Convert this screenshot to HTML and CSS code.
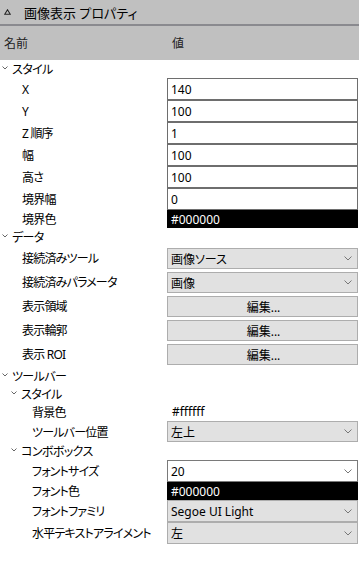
FILE: index.html
```html
<!DOCTYPE html>
<html lang="ja">

<head>
  <meta charset="UTF-8">
  <meta name="viewport" content="width=device-width, initial-scale=1.0">
  <title>画像表示 プロパティ</title>
  <link rel="stylesheet" href="styles.css">
</head>

<body>
  <div class="panel">
    <div class="titlebar">
      <svg class="collapse" width="7" height="6" viewBox="0 0 7 6"><polygon points="3.5,0.8 6.3,5.3 0.7,5.3" fill="none" stroke="#222" stroke-width="1.1"/></svg>
      <span>画像表示 プロパティ</span>
    </div>
    <div class="colhead">
      <span>名前</span>
      <span class="val-head">値</span>
    </div>

    <!-- スタイル -->
    <div class="row h18 section lv0"><svg class="chev" width="6" height="4" viewBox="0 0 6 4"><polyline points="0.5,0.5 3,3 5.5,0.5" fill="none" stroke="#666" stroke-width="1"/></svg>スタイル</div>
    <div class="row h22"><span class="label lv1">X</span><div class="text">140</div></div>
    <div class="row h22"><span class="label lv1">Y</span><div class="text">100</div></div>
    <div class="row h22"><span class="label lv1">Z 順序</span><div class="text">1</div></div>
    <div class="row h22"><span class="label lv1">幅</span><div class="text">100</div></div>
    <div class="row h22"><span class="label lv1">高さ</span><div class="text">100</div></div>
    <div class="row h22"><span class="label lv1">境界幅</span><div class="text">0</div></div>
    <div class="row h18"><span class="label lv1">境界色</span><div class="color">#000000</div></div>

    <!-- データ -->
    <div class="row h18 section lv0"><svg class="chev" width="6" height="4" viewBox="0 0 6 4"><polyline points="0.5,0.5 3,3 5.5,0.5" fill="none" stroke="#666" stroke-width="1"/></svg>データ</div>
    <div class="row h24 spaced"><span class="label lv1">接続済みツール</span><div class="combo"><span>画像ソース</span><svg class="drop" width="8" height="5" viewBox="0 0 8 5"><polyline points="0.5,0.5 4,4 7.5,0.5" fill="none" stroke="#777" stroke-width="1"/></svg></div></div>
    <div class="row h24 spaced"><span class="label lv1">接続済みパラメータ</span><div class="combo"><span>画像</span><svg class="drop" width="8" height="5" viewBox="0 0 8 5"><polyline points="0.5,0.5 4,4 7.5,0.5" fill="none" stroke="#777" stroke-width="1"/></svg></div></div>
    <div class="row h24 spaced"><span class="label lv1">表示領域</span><div class="button">編集...</div></div>
    <div class="row h24 spaced"><span class="label lv1">表示輪郭</span><div class="button">編集...</div></div>
    <div class="row h24 spaced"><span class="label lv1">表示 ROI</span><div class="button">編集...</div></div>

    <!-- ツールバー -->
    <div class="row h20 section lv0"><svg class="chev" width="6" height="4" viewBox="0 0 6 4"><polyline points="0.5,0.5 3,3 5.5,0.5" fill="none" stroke="#666" stroke-width="1"/></svg>ツールバー</div>
    <div class="row h16 section lv1"><svg class="chev" width="6" height="4" viewBox="0 0 6 4"><polyline points="0.5,0.5 3,3 5.5,0.5" fill="none" stroke="#666" stroke-width="1"/></svg>スタイル</div>
    <div class="row h19"><span class="label lv2">背景色</span><div class="plain">#ffffff</div></div>
    <div class="row h21"><span class="label lv2">ツールバー位置</span><div class="combo"><span>左上</span><svg class="drop" width="8" height="5" viewBox="0 0 8 5"><polyline points="0.5,0.5 4,4 7.5,0.5" fill="none" stroke="#777" stroke-width="1"/></svg></div></div>
    <div class="row h18 section lv1"><svg class="chev" width="6" height="4" viewBox="0 0 6 4"><polyline points="0.5,0.5 3,3 5.5,0.5" fill="none" stroke="#666" stroke-width="1"/></svg>コンボボックス</div>
    <div class="row h22"><span class="label lv2">フォントサイズ</span><div class="combo editable"><span>20</span><svg class="drop" width="8" height="5" viewBox="0 0 8 5"><polyline points="0.5,0.5 4,4 7.5,0.5" fill="none" stroke="#777" stroke-width="1"/></svg></div></div>
    <div class="row h18"><span class="label lv2">フォント色</span><div class="color">#000000</div></div>
    <div class="row h22"><span class="label lv2">フォントファミリ</span><div class="combo"><span>Segoe UI Light</span><svg class="drop" width="8" height="5" viewBox="0 0 8 5"><polyline points="0.5,0.5 4,4 7.5,0.5" fill="none" stroke="#777" stroke-width="1"/></svg></div></div>
    <div class="row h22"><span class="label lv2">水平テキストアライメント</span><div class="combo"><span>左</span><svg class="drop" width="8" height="5" viewBox="0 0 8 5"><polyline points="0.5,0.5 4,4 7.5,0.5" fill="none" stroke="#777" stroke-width="1"/></svg></div></div>
  </div>
</body>

</html>
```

FILE: styles.css
```css
html,
body {
  margin: 0;
  padding: 0;
  background: #ffffff;
}

body {
  font-family: "Noto Sans", "Noto Sans CJK JP", sans-serif;
  font-size: 12px;
  color: #000000;
  font-feature-settings: "palt";
  width: 359px;
  height: 561px;
  overflow: hidden;
}

.titlebar {
  height: 24px;
  background: #c0c0c0;
  border-bottom: 2px solid #8a8a8f;
  display: flex;
  align-items: center;
  gap: 13px;
  padding-left: 4px;
  font-size: 13px;
}

.colhead {
  height: 34px;
  background: #c0c0c0;
  display: grid;
  grid-template-columns: 167px 1fr;
  align-items: center;
  padding-left: 4px;
  color: #222222;
}

.val-head {
  padding-left: 1px;
}

.row {
  display: grid;
  grid-template-columns: 167px 191px;
  align-items: center;
}

.h16 { height: 16px; }
.h18 { height: 18px; }
.h19 { height: 19px; }
.h20 { height: 20px; }
.h21 { height: 21px; }
.h22 { height: 22px; }
.h24 { height: 24px; }

.section {
  display: flex;
  align-items: center;
  gap: 4px;
  letter-spacing: -0.6px;
}

.section.lv0 { padding-left: 2px; }
.section.lv1 { padding-left: 11px; }

.chev {
  margin-top: -2px;
}

.label {
  white-space: nowrap;
  overflow: hidden;
  letter-spacing: -0.8px;
}

.label.lv1 { padding-left: 22px; }
.label.lv2 { padding-left: 32px; }

.text {
  box-sizing: border-box;
  height: 22px;
  border: 1px solid #6e6e6e;
  background: #ffffff;
  padding-left: 3px;
  display: flex;
  align-items: center;
}

.color {
  height: 18px;
  background: #000000;
  color: #ffffff;
  padding-left: 4px;
  display: flex;
  align-items: center;
}

.plain {
  padding-left: 5px;
}

.combo,
.button {
  box-sizing: border-box;
  height: 21px;
  border: 1px solid #adadad;
  background: #e1e1e1;
  display: flex;
  align-items: center;
}

.row.h22 .combo {
  height: 22px;
}

.combo {
  justify-content: space-between;
  padding: 0 5px 0 3px;
}

.combo.editable {
  background: #ffffff;
  border-color: #7a7a7a;
}

.button {
  justify-content: center;
  padding-left: 2px;
}

.spaced .combo,
.spaced .button {
  align-self: start;
  margin-top: 2px;
}
```
